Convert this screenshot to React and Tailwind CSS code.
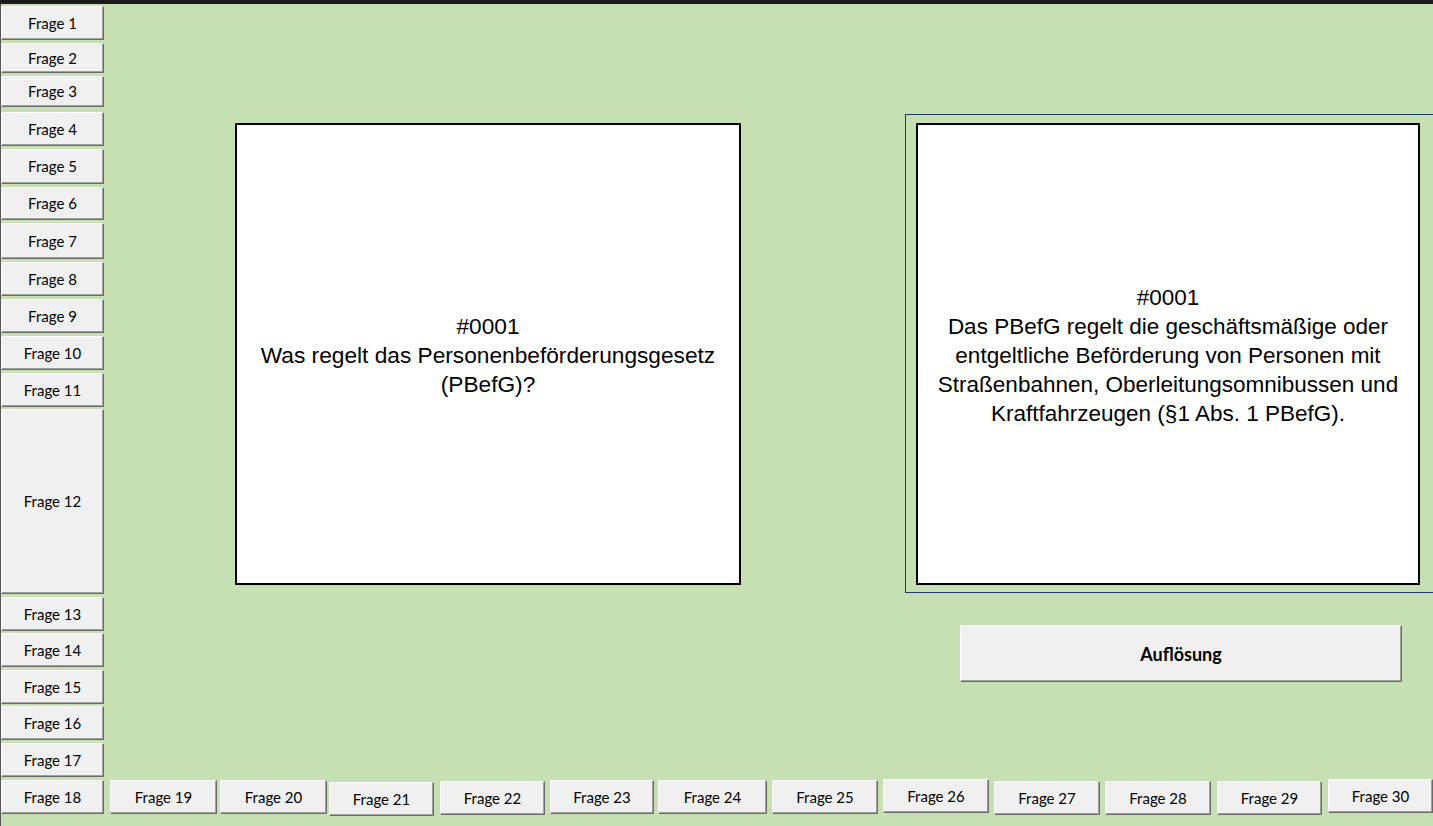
import React from "react";

const btn =
  "flex items-center justify-center bg-[#f0f0f0] border border-t-[#fdfdfd] border-l-[#fdfdfd] border-r-[#6b6b6b] border-b-[#6b6b6b] shadow-[inset_-1px_-1px_0_#a0a0a0] text-[15px] text-black leading-none shrink-0";

const leftButtons = [
  { n: 1, mt: "mt-[2px]", h: "h-[34px]" },
  { n: 2, mt: "mt-[3px]", h: "h-[30px]" },
  { n: 3, mt: "mt-[3px]", h: "h-[31px]" },
  { n: 4, mt: "mt-[5px]", h: "h-[34px]" },
  { n: 5, mt: "mt-[3px]", h: "h-[35px]" },
  { n: 6, mt: "mt-[3px]", h: "h-[33px]" },
  { n: 7, mt: "mt-[3px]", h: "h-[36px]" },
  { n: 8, mt: "mt-[3px]", h: "h-[34px]" },
  { n: 9, mt: "mt-[3px]", h: "h-[34px]" },
  { n: 10, mt: "mt-[3px]", h: "h-[34px]" },
  { n: 11, mt: "mt-[3px]", h: "h-[34px]" },
  { n: 12, mt: "mt-[2px]", h: "h-[185px]" },
  { n: 13, mt: "mt-[3px]", h: "h-[34px]" },
  { n: 14, mt: "mt-[2px]", h: "h-[34px]" },
  { n: 15, mt: "mt-[3px]", h: "h-[34px]" },
  { n: 16, mt: "mt-[2px]", h: "h-[34px]" },
  { n: 17, mt: "mt-[3px]", h: "h-[34px]" },
  { n: 18, mt: "mt-[3px]", h: "h-[34px]" },
];

const bottomButtons = [
  { n: 19, cls: "ml-[6px] mt-[1px] w-[107px]" },
  { n: 20, cls: "ml-[3px] mt-[1px] w-[107px]" },
  { n: 21, cls: "ml-[2px] mt-[3px] w-[105px]" },
  { n: 22, cls: "ml-[6px] mt-[2px] w-[105px]" },
  { n: 23, cls: "ml-[5px] mt-[1px] w-[104px]" },
  { n: 24, cls: "ml-[4px] mt-[1px] w-[109px]" },
  { n: 25, cls: "ml-[5px] mt-[1px] w-[106px]" },
  { n: 26, cls: "ml-[5px] mt-[0px] w-[106px]" },
  { n: 27, cls: "ml-[5px] mt-[2px] w-[106px]" },
  { n: 28, cls: "ml-[5px] mt-[2px] w-[106px]" },
  { n: 29, cls: "ml-[6px] mt-[2px] w-[105px]" },
  { n: 30, cls: "ml-[6px] mt-[0px] w-[105px]" },
];

export default function App() {
  return (
    <div
      className="w-[1433px] h-[826px] bg-[#c6e0b4] overflow-hidden flex flex-col"
      style={{ fontFamily: "Lato, 'Open Sans', sans-serif" }}
    >
      <div className="h-[4px] bg-[#1b1b1b] shrink-0" />
      <div className="flex flex-1 min-h-0">
        <div className="w-px bg-[#555555] shrink-0" />
        <div className="flex flex-col w-[103px] shrink-0">
          {leftButtons.map((b) => (
            <div key={b.n} className={`${btn} ${b.mt} ${b.h} w-[103px] border-l-[#6b6b6b]`}>
              Frage {b.n}
            </div>
          ))}
        </div>
        <div className="flex flex-col flex-1 min-w-0">
          <div className="h-[775px] flex items-start shrink-0">
            <div
              className="ml-[131px] mt-[119px] w-[506px] h-[462px] bg-white border-2 border-black flex items-center justify-center text-center text-[22.7px] leading-[29px] text-black shrink-0"
              style={{ fontFamily: "'Liberation Sans', Arial, sans-serif" }}
            >
              <div className="mt-[2px]">
                #0001
                <br />
                Was regelt das Personenbeförderungsgesetz
                <br />
                (PBefG)?
              </div>
            </div>
            <div className="ml-[164px] mt-[110px] flex flex-col shrink-0">
              <div className="w-[560px] border border-[#203864] pl-[10px] pt-[8px] pb-[7px]">
                <div
                  className="w-[504px] h-[462px] bg-white border-2 border-black flex items-center justify-center text-center text-[22.5px] leading-[29px] text-black"
                  style={{ fontFamily: "'Liberation Sans', Arial, sans-serif" }}
                >
                  <div className="mt-[3px]">
                    #0001
                    <br />
                    Das PBefG regelt die geschäftsmäßige oder
                    <br />
                    entgeltliche Beförderung von Personen mit
                    <br />
                    Straßenbahnen, Oberleitungsomnibussen und
                    <br />
                    Kraftfahrzeugen (§1 Abs. 1 PBefG).
                  </div>
                </div>
              </div>
              <div
                className={`${btn} ml-[55px] mt-[32px] w-[442px] h-[57px] text-[18px] font-bold`}
              >
                <span>Auflösung</span>
              </div>
            </div>
          </div>
          <div className="flex items-start">
            {bottomButtons.map((b) => (
              <div key={b.n} className={`${btn} ${b.cls} h-[34px]`}>
                Frage {b.n}
              </div>
            ))}
          </div>
        </div>
      </div>
    </div>
  );
}
